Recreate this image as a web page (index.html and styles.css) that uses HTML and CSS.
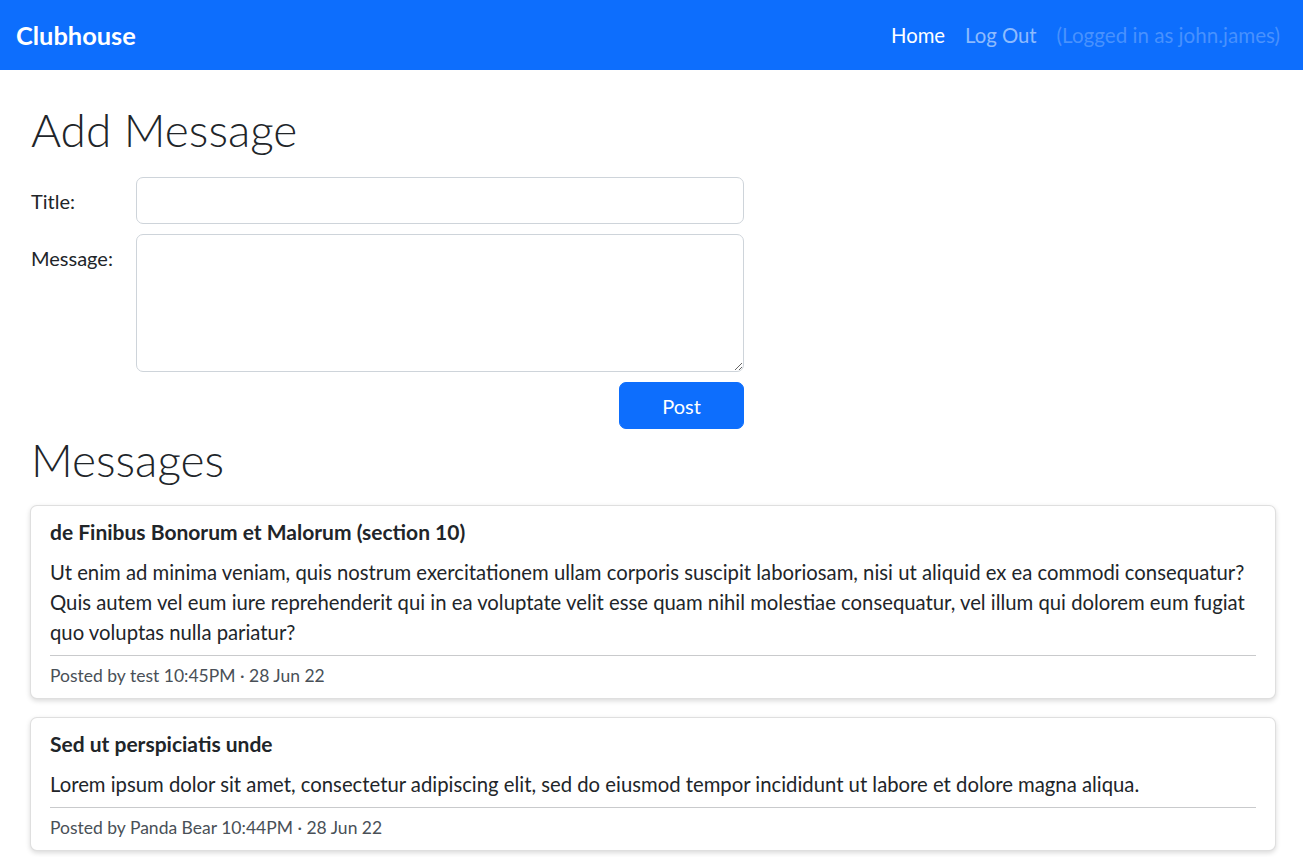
FILE: index.html
```html
<!DOCTYPE html>
<html lang="en">
<head>
<meta charset="utf-8">
<title>Clubhouse</title>
<link rel="stylesheet" href="styles.css">
</head>
<body>
<nav class="navbar">
  <a class="brand" href="#">Clubhouse</a>
  <div class="nav-links">
    <a class="nav-link active" href="#">Home</a>
    <a class="nav-link" href="#">Log Out</a>
    <span class="nav-text">(Logged in as john.james)</span>
  </div>
</nav>
<main class="page">
  <h1 class="heading heading-add">Add Message</h1>
  <form class="msg-form">
    <label class="form-label" for="title">Title:</label>
    <input class="form-control" id="title" type="text">
    <label class="form-label" for="message">Message:</label>
    <textarea class="form-control form-textarea" id="message"></textarea>
    <div class="form-actions">
      <button class="btn-primary" type="button">Post</button>
    </div>
  </form>
  <h2 class="heading heading-messages">Messages</h2>
  <div class="card-list">
    <article class="card">
      <h3 class="card-title">de Finibus Bonorum et Malorum (section 10)</h3>
      <p class="card-text">Ut enim ad minima veniam, quis nostrum exercitationem ullam corporis suscipit laboriosam, nisi ut aliquid ex ea commodi consequatur? Quis autem vel eum iure reprehenderit qui in ea voluptate velit esse quam nihil molestiae consequatur, vel illum qui dolorem eum fugiat quo voluptas nulla pariatur?</p>
      <hr class="card-rule">
      <p class="card-footer">Posted by test 10:45PM · 28 Jun 22</p>
    </article>
    <article class="card">
      <h3 class="card-title">Sed ut perspiciatis unde</h3>
      <p class="card-text">Lorem ipsum dolor sit amet, consectetur adipiscing elit, sed do eiusmod tempor incididunt ut labore et dolore magna aliqua.</p>
      <hr class="card-rule">
      <p class="card-footer">Posted by Panda Bear 10:44PM · 28 Jun 22</p>
    </article>
  </div>
</main>
</body>
</html>
```
FILE: styles.css
```css
* { box-sizing: border-box; }

html, body {
  margin: 0;
  padding: 0;
}

body {
  font-family: Lato, "Liberation Sans", sans-serif;
  font-size: 20px;
  line-height: 30px;
  color: #212529;
  background: #fff;
}

.navbar {
  height: 70px;
  background: #0d6efd;
  display: flex;
  align-items: center;
  justify-content: space-between;
  padding: 0 23px 0 16px;
}

.brand {
  color: #fff;
  font-weight: 700;
  font-size: 25.4px;
  text-decoration: none;
}

.nav-links {
  display: flex;
  align-items: center;
  gap: 20px;
}

.nav-link {
  color: rgba(255, 255, 255, 0.55);
  text-decoration: none;
  font-size: 20.3px;
}

.nav-link.active { color: #fff; }

.nav-text {
  color: rgba(255, 255, 255, 0.25);
  font-size: 20.6px;
}

.page {
  padding: 0 27px 20px 30px;
}

.heading {
  font-weight: 300;
  font-size: 46px;
  line-height: 60px;
  margin: 0;
  padding-left: 1px;
}

.heading-add {
  padding-top: 30px;
}

.msg-form {
  margin-top: 17px;
  display: grid;
  grid-template-columns: 106px 608px;
  row-gap: 10px;
}

.form-label {
  padding-left: 1px;
  padding-top: 9px;
}

.form-control {
  display: block;
  width: 100%;
  height: 47px;
  border: 1px solid #ced4da;
  border-radius: 7px;
  font: inherit;
  padding: 7px 15px;
  background: #fff;
}

.form-textarea {
  height: 138px;
  resize: vertical;
}

.form-actions {
  grid-column: 2;
  display: flex;
  justify-content: flex-end;
}

.btn-primary {
  width: 125px;
  height: 47px;
  background: #0d6efd;
  color: #fff;
  border: 1px solid #0d6efd;
  border-radius: 7px;
  font: inherit;
}

.heading-messages {
  margin-top: 1px;
}

.card-list {
  margin-top: 15px;
  display: flex;
  flex-direction: column;
  gap: 18px;
}

.card {
  border: 1px solid rgba(0, 0, 0, 0.125);
  border-radius: 7px;
  box-shadow: 0 2px 5px rgba(0, 0, 0, 0.15);
  padding: 13px 19px 9px;
  background: #fff;
}

.card-title {
  margin: 0;
  font-size: 21px;
  line-height: 26px;
  font-weight: 700;
}

.card-text {
  margin: 12px 0 0;
  font-size: 20.3px;
}

.card-rule {
  margin: 8px 0 6px;
  border: 0;
  border-top: 1px solid #c9cacc;
}

.card-footer {
  margin: 0;
  font-size: 17.5px;
  line-height: 27px;
  color: #495057;
}
```
